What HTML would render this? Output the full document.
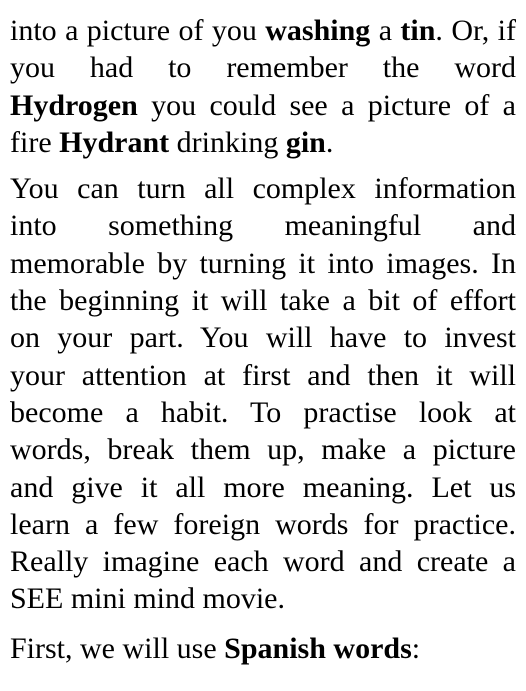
<!DOCTYPE html>
<html><head><meta charset="utf-8"><style>
html,body{margin:0;padding:0;background:#fff;}
body{width:526px;height:691px;overflow:hidden;font-family:"Liberation Serif","Tinos","Times New Roman",Times,serif;font-size:30px;color:#000;}
.w{position:absolute;left:10px;width:506px;top:12px;}
.l{line-height:37.3px;height:37.3px;text-align:justify;text-align-last:justify;white-space:nowrap;}
.e{text-align-last:left;}
.p{margin-top:9px;}
.p2{margin-top:12px;}
</style></head><body><div class="w">
<div class="l">into a picture of you <b>washing</b> a <b>tin</b>. Or, if</div>
<div class="l">you had to remember the word</div>
<div class="l"><b>Hydrogen</b> you could see a picture of a</div>
<div class="l e">fire <b>Hydrant</b> drinking <b>gin</b>.</div>
<div class="p"></div>
<div class="l">You can turn all complex information</div>
<div class="l">into something meaningful and</div>
<div class="l">memorable by turning it into images. In</div>
<div class="l">the beginning it will take a bit of effort</div>
<div class="l">on your part. You will have to invest</div>
<div class="l">your attention at first and then it will</div>
<div class="l">become a habit. To practise look at</div>
<div class="l">words, break them up, make a picture</div>
<div class="l">and give it all more meaning. Let us</div>
<div class="l">learn a few foreign words for practice.</div>
<div class="l">Really imagine each word and create a</div>
<div class="l e">SEE mini mind movie.</div>
<div class="p2"></div>
<div class="l e">First, we will use <b>Spanish words</b>:</div>
</div></body></html>
